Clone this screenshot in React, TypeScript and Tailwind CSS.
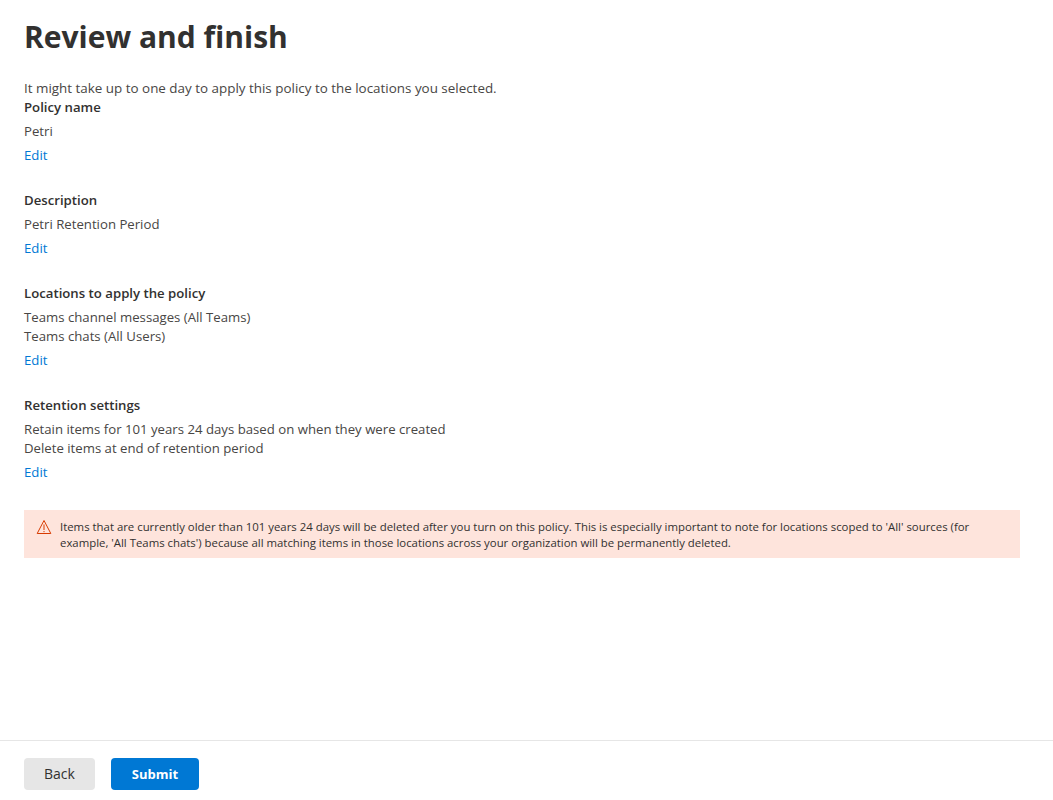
import { ReactNode } from "react";

function Section({ title, children }: { title: string; children: ReactNode }) {
    return (
        <div className="mb-[26px] text-[13.2px]">
            <div className="font-semibold h-[19px] leading-[19px] text-[#323130]">{title}</div>
            <div className="mt-[5px]">{children}</div>
            <a className="block mt-[5px] text-[#0078d4] h-[19px] leading-[19px]">Edit</a>
        </div>
    );
}

export default function App() {
    return (
        <div className="h-screen flex flex-col bg-white text-[#484644] text-[13.42px] leading-[19px] font-['Open_Sans',sans-serif]">
            <div className="flex-1 pl-6 pr-[33px]">
                <h1 className="text-[30px] font-bold leading-[40px] pt-[17px] h-[57px] box-content text-[#323130]">Review and finish</h1>
                <p className="mt-[5px]">It might take up to one day to apply this policy to the locations you selected.</p>
                <Section title="Policy name">
                    <div>Petri</div>
                </Section>
                <Section title="Description">
                    <div>Petri Retention Period</div>
                </Section>
                <Section title="Locations to apply the policy">
                    <div>Teams channel messages (All Teams)</div>
                    <div>Teams chats (All Users)</div>
                </Section>
                <Section title="Retention settings">
                    <div>Retain items for 101 years 24 days based on when they were created</div>
                    <div>Delete items at end of retention period</div>
                </Section>
                <div className="flex bg-[#fee4dc] h-12 mt-[28px] pl-3 pr-8 pt-[9px] text-[11.38px] leading-4 text-[#323130]">
                    <svg viewBox="0 0 16 16" className="w-4 h-4 shrink-0 mr-2 text-[#d83b01]" fill="none" stroke="currentColor" strokeWidth="1">
                        <path d="M8 1.5 14.8 14.5H1.2Z" strokeLinejoin="round" />
                        <path d="M8 5.5v5.5M8 12v1.2" />
                    </svg>
                    <p>Items that are currently older than 101 years 24 days will be deleted after you turn on this policy. This is especially important to note for locations scoped to 'All' sources (for example, 'All Teams chats') because all matching items in those locations across your organization will be permanently deleted.</p>
                </div>
            </div>
            <div className="h-[60px] border-t border-[#e6e6e6] flex items-start gap-4 pl-6 pt-[17px]">
                <button className="w-[71px] h-8 bg-[#e6e6e6] rounded-sm text-sm text-[#323130]">Back</button>
                <button className="w-[88px] h-8 bg-[#0078d4] rounded-sm text-white font-bold text-[13px]">Submit</button>
            </div>
        </div>
    );
}
